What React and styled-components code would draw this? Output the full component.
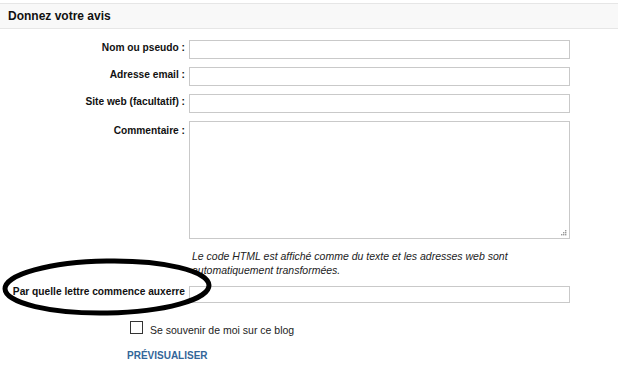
import React from "react";
import styled, { createGlobalStyle } from "styled-components";

const Global = createGlobalStyle`
  html, body { margin: 0; padding: 0; background: #fff; }
  body { font-family: "Liberation Sans", Arial, sans-serif; color: #111; }
`;

const Page = styled.div`
  width: 618px;
  padding-top: 3px;
`;

const Header = styled.h2`
  margin: 0;
  height: 24px;
  line-height: 24px;
  padding-left: 8px;
  background: #f8f8f8;
  border-top: 1px solid #e6e6e6;
  border-bottom: 1px solid #e6e6e6;
  font-size: 12px;
  font-weight: bold;
  color: #111;
`;

const Form = styled.div`
  display: flex;
  flex-direction: column;
  padding: 11px 0 0 8px;
`;

const Row = styled.div`
  position: relative;
  display: flex;
  align-items: flex-start;
  gap: 4px;
  margin-bottom: ${(p) => p.$mb ?? 8}px;
`;

const Label = styled.label`
  width: 177px;
  flex: none;
  text-align: right;
  font-size: 10.2px;
  line-height: 12px;
  font-weight: bold;
  color: #111;
  white-space: nowrap;
  padding-top: ${(p) => p.$pad ?? 2}px;
`;

const Field = styled.div`
  position: relative;
  width: 381px;
  flex: none;
`;

const Input = styled.input`
  display: block;
  box-sizing: border-box;
  width: 381px;
  height: ${(p) => p.$h ?? 19}px;
  margin: 0;
  border: 1px solid #c9c9c9;
  background: #fff;
  outline: none;
`;

const TextArea = styled.textarea`
  display: block;
  box-sizing: border-box;
  width: 381px;
  height: 118px;
  margin: 0;
  border: 1px solid #c9c9c9;
  background: #fff;
  resize: none;
  outline: none;
`;

const Grip = styled.svg`
  position: absolute;
  right: 3px;
  bottom: 3px;
`;

const Help = styled.p`
  margin: 10px 0 9px 181px;
  padding-left: 3px;
  width: 378px;
  font-size: 10.5px;
  line-height: 14px;
  font-style: italic;
  color: #222;
`;

const Circle = styled.svg`
  position: absolute;
  left: -8px;
  top: -30px;
  pointer-events: none;
`;

const Remember = styled.div`
  display: flex;
  align-items: baseline;
  gap: 7px;
  margin: 18px 0 0 130px;
  font-size: 10.5px;
  line-height: 13px;
  color: #222;
`;

const Box = styled.span`
  display: inline-block;
  box-sizing: border-box;
  width: 13px;
  height: 13px;
  border: 1px solid #333;
  background: #fff;
`;

const Preview = styled.a`
  display: block;
  margin: 13px 0 0 127px;
  font-size: 10px;
  line-height: 12px;
  font-weight: bold;
  color: #336699;
  text-decoration: none;
`;

export default function App() {
  return (
    <Page>
      <Global />
      <Header>Donnez votre avis</Header>
      <Form>
        <Row>
          <Label>Nom ou pseudo :</Label>
          <Field>
            <Input />
          </Field>
        </Row>
        <Row>
          <Label>Adresse email :</Label>
          <Field>
            <Input />
          </Field>
        </Row>
        <Row>
          <Label>Site web (facultatif) :</Label>
          <Field>
            <Input />
          </Field>
        </Row>
        <Row $mb={0}>
          <Label $pad={4}>Commentaire :</Label>
          <Field>
            <TextArea />
            <Grip width="6" height="6" viewBox="0 0 6 6">
              <g fill="#9a9a9a">
                <rect x="4" y="0" width="1.4" height="1.4" />
                <rect x="2" y="2" width="1.4" height="1.4" />
                <rect x="4" y="2" width="1.4" height="1.4" />
                <rect x="0" y="4" width="1.4" height="1.4" />
                <rect x="2" y="4" width="1.4" height="1.4" />
                <rect x="4" y="4" width="1.4" height="1.4" />
              </g>
            </Grip>
          </Field>
        </Row>
        <Help>
          Le code HTML est affiché comme du texte et les adresses web sont
          automatiquement transformées.
        </Help>
        <Row $mb={0}>
          <Label $pad={0}>Par quelle lettre commence auxerre</Label>
          <Field>
            <Input $h={17} />
          </Field>
          <Circle width="216" height="62" viewBox="0 0 216 62">
            <ellipse
              cx="107"
              cy="31"
              rx="102"
              ry="26"
              fill="none"
              stroke="#000"
              strokeWidth="5"
              transform="rotate(-1 107 31)"
            />
          </Circle>
        </Row>
      </Form>
      <Remember>
        <Box />
        <span>Se souvenir de moi sur ce blog</span>
      </Remember>
      <Preview href="#">PRÉVISUALISER</Preview>
    </Page>
  );
}
